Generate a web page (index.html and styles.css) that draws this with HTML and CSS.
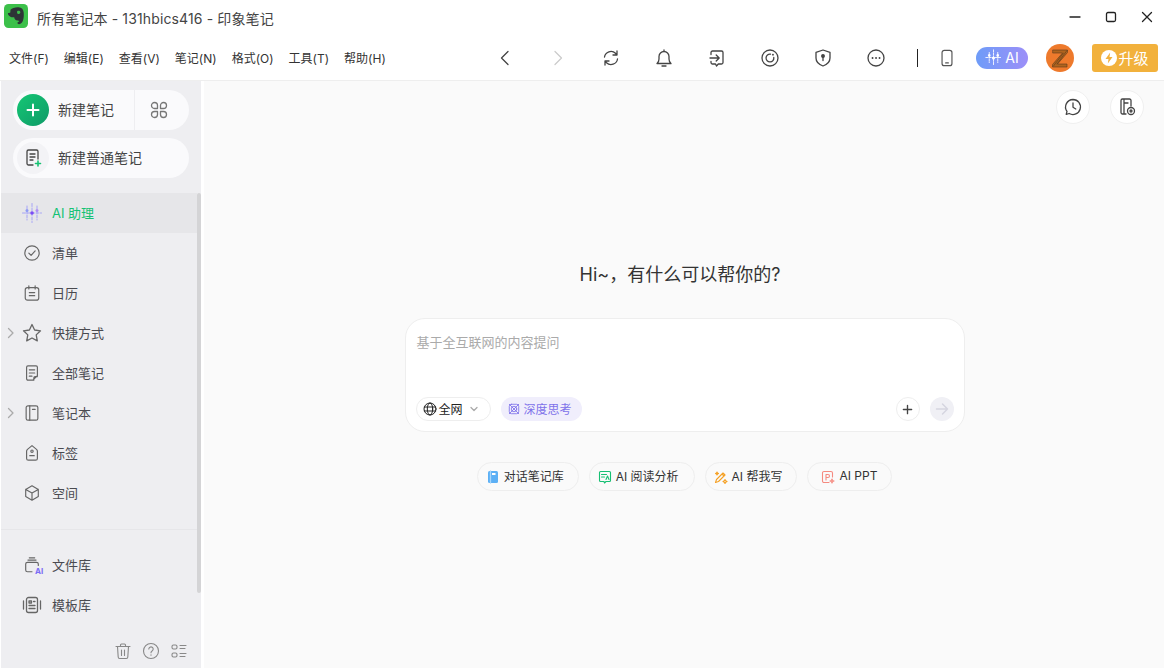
FILE: index.html
```html
<!DOCTYPE html>
<html>
<head>
  <title>印象笔记</title>
  <link rel="stylesheet" href="styles.css">
</head>
<body>
  <div class="titlebar">
    <svg class="logo" viewBox="0 0 24 24"><rect width="24" height="24" rx="4.500" fill="#3cc04a"/><path d="M6.500 5.800C8 3.800 11.500 3 14.500 3.200c3.300.2 5 2.200 5.200 5.300.2 2.600.2 5.700-.8 8.300-.6 1.600-1.900 3.300-3.700 3.400-1.500.1-2.300-1.500-1.300-2.300.5-.4 1.100-.3 1.400-.1-.2-.9-1-1.100-1.900-1.200-1.900-.2-3-1.600-3.200-3.400-2 .5-3.800-.2-5.400-1.800-.8-.8-1-1.500-.8-2.300.6-.2 1.600-.2 2.300-.6z" fill="#2d3436"/><path d="M13.200 7.200c1.300-.8 2.900-.3 3.200 1-.2 1.300-1.200 2-2.200 1.800-1-.2-1.500-1.800-1-2.800z" fill="#3cc04a"/></svg>
    <span class="title">所有笔记本 - 131hbics416 - 印象笔记</span>
    <div class="winctl">
      <svg viewBox="0 0 12 12"><path d="M1 6h10"/></svg>
      <svg viewBox="0 0 12 12"><rect x="1.500" y="1.500" width="9" height="9" rx="1.500"/></svg>
      <svg viewBox="0 0 12 12"><path d="M1.500 1.500l9 9M10.500 1.500l-9 9"/></svg>
    </div>
  </div>

  <div class="toolbar">
    <div class="menu">
      <span>文件(F)</span><span>编辑(E)</span><span>查看(V)</span><span>笔记(N)</span><span>格式(O)</span><span>工具(T)</span><span>帮助(H)</span>
    </div>
    <div class="tools">
      <svg class="tool" viewBox="0 0 20 20"><path d="M13 3.500L6.500 10l6.500 6.500"/></svg>
      <svg class="tool off" viewBox="0 0 20 20"><path d="M7 3.500l6.500 6.500L7 16.500"/></svg>
      <svg class="tool" viewBox="0 0 20 20"><path d="M3.500 9a6.500 6.500 0 0 1 11-3.700L16 7M16.500 11a6.500 6.500 0 0 1-11 3.700L4 13M16 3v4h-4M4 17v-4h4"/></svg>
      <svg class="tool" viewBox="0 0 20 20"><path d="M3 15.500c1.300-1 2-2.200 2-4.500V8.500a5 5 0 0 1 10 0V11c0 2.300.7 3.500 2 4.500zM10 3.500V2M8 18h4"/></svg>
      <svg class="tool" viewBox="0 0 20 20"><path d="M4 6.500V4.500A1.500 1.500 0 0 1 5.500 3h9A1.500 1.500 0 0 1 16 4.500v10a1.500 1.500 0 0 1-1.500 1.500h-3.200l-1.800 2-1-2H5.500A1.500 1.500 0 0 1 4 14.500V13.500M3 10h9M9.200 7l3 3-3 3"/></svg>
      <svg class="tool" viewBox="0 0 20 20"><circle cx="10" cy="10" r="8"/><path d="M13.800 9.500a3.900 3.900 0 1 1-3.300-3.300"/><path class="dots" d="M12.900 6.700h.1"/></svg>
      <svg class="tool" viewBox="0 0 20 20"><path d="M10 2l7 2.300V10c0 3.700-2.800 6.500-7 8-4.200-1.500-7-4.300-7-8V4.300z"/><circle class="solid" cx="10" cy="8" r="1.300"/><path d="M10 8.500v4"/></svg>
      <svg class="tool" viewBox="0 0 20 20"><circle cx="10" cy="10" r="8"/><path class="dots" d="M6.500 10h.1M10 10h.1M13.500 10h.1"/></svg>
      <span class="sep"></span>
      <svg class="phone" viewBox="0 0 20 20"><rect x="4.500" y="1.500" width="11" height="17" rx="2.500"/><path d="M8.500 15.500h3"/></svg>
      <span class="ai-btn">
        <svg viewBox="0 0 20 20"><path stroke-dasharray="2.500 1.200" d="M10 1v18M5 4v12M15 4v12M1 10h18"/><circle class="white" cx="10" cy="10.500" r="1.800"/><circle class="white" cx="5" cy="7.500" r="1.500"/><circle class="white" cx="15" cy="7.500" r="1.500"/></svg>AI
      </span>
      <svg class="avatar" viewBox="0 0 28 28"><circle cx="14" cy="14" r="14" fill="#ee7a2c"/><path d="M7 6h14.500v2.500L11.500 20H21v3H6.500v-2.500L16.500 9H7z" fill="#b0641e"/><path d="M7 6h14.500v2.500L11.500 20H21v3H6.500v-2.500L16.500 9H7zM21 6.500l-10 13.500M17.500 9L7.500 22" fill="none" stroke="#5a3a1c" stroke-width=".6"/></svg>
      <span class="upgrade">
        <svg viewBox="0 0 16 16"><circle cx="8" cy="8" r="8" fill="#fff"/><path d="M9.200 2.500L4.500 9h3L6.800 13.500 11.500 7h-3z" fill="#f2b13c"/></svg>升级
      </span>
    </div>
  </div>

  <div class="app">
    <div class="sidebar">
      <div class="newbtn first">
        <span class="plus"><svg viewBox="0 0 16 16"><path d="M8 2.500v11M2.500 8h11"/></svg></span>
        <span class="newlabel">新建笔记</span>
        <span class="apps"><svg viewBox="0 0 18 18"><path d="M7.500 7.500H4.500a3 3 0 1 1 3-3zM10.500 7.500v-3a3 3 0 1 1 3 3zM7.500 10.500v3a3 3 0 1 1-3-3zM10.500 10.500h3a3 3 0 1 1-3 3z"/></svg></span>
      </div>
      <div class="newbtn">
        <span class="plain">
          <svg viewBox="0 0 20 20"><path class="dark" d="M10 17H5.500A1.500 1.500 0 0 1 4 15.500v-12A1.500 1.500 0 0 1 5.500 2h8A1.500 1.500 0 0 1 15 3.500V11M7 6h5M7 9h5M7 12h3"/><path class="green" d="M15 13v5M12.500 15.500h5"/></svg>
        </span>
        <span class="newlabel">新建普通笔记</span>
      </div>

      <div class="nav">
        <div class="item active">
          <svg class="ico big" viewBox="0 0 20 20"><path class="violet" stroke-dasharray="3 1.500" d="M10 .5v19M5 3v14M15 3v14M.5 10h19"/><circle cx="10" cy="10" r="1.800" fill="#7b4cf5"/><circle cx="5" cy="7.500" r="1.500" fill="#8f9bf5"/><circle cx="15" cy="7.500" r="1.500" fill="#b08ff5"/></svg>
          <span>AI 助理</span>
        </div>
        <div class="item">
          <svg class="ico" viewBox="0 0 20 20"><circle cx="10" cy="10" r="8"/><path d="M6.500 10.200l2.500 2.500 4.500-5"/></svg>
          <span>清单</span>
        </div>
        <div class="item">
          <svg class="ico" viewBox="0 0 20 20"><rect x="2.500" y="4" width="15" height="14" rx="2.500"/><path d="M6.500 2v3.500M13.500 2v3.500M7 9.500h6M7 13h6"/></svg>
          <span>日历</span>
        </div>
        <div class="item">
          <svg class="caret" viewBox="0 0 8 12"><path d="M1.500 1.500L6 6l-4.500 4.500"/></svg>
          <svg class="ico big" viewBox="0 0 20 20"><path d="M10 1.500l2.600 5.500 5.900.8-4.300 4.100 1.100 6-5.300-2.900-5.300 2.900 1.100-6L1.500 7.800 7.400 7z"/></svg>
          <span>快捷方式</span>
        </div>
        <div class="item">
          <svg class="ico" viewBox="0 0 20 20"><path d="M11 18H5.500A1.500 1.500 0 0 1 4 16.500v-13A1.500 1.500 0 0 1 5.500 2h9A1.500 1.500 0 0 1 16 3.500V13zM7 6.500h6M7 10h6M7 13.500h3M16 14h-2.500a1.500 1.500 0 0 0-1.500 1.500V18"/></svg>
          <span>全部笔记</span>
        </div>
        <div class="item">
          <svg class="caret" viewBox="0 0 8 12"><path d="M1.500 1.500L6 6l-4.500 4.500"/></svg>
          <svg class="ico" viewBox="0 0 20 20"><rect x="3.500" y="2" width="13" height="16" rx="2"/><path d="M7.500 2v16M10.500 6h3"/></svg>
          <span>笔记本</span>
        </div>
        <div class="item">
          <svg class="ico" viewBox="0 0 20 20"><path d="M10 1.800l5 4.200c.6.500 1 1.200 1 2v8a2 2 0 0 1-2 2H6a2 2 0 0 1-2-2V8c0-.8.4-1.500 1-2z"/><circle cx="10" cy="8" r="1.300"/><path d="M7.500 13h5"/></svg>
          <span>标签</span>
        </div>
        <div class="item">
          <svg class="ico" viewBox="0 0 20 20"><path d="M10 2l7 4v8l-7 4-7-4V6zM3 6l7 4 7-4M10 10v8"/></svg>
          <span>空间</span>
        </div>
      </div>

      <div class="lib">
        <div class="item">
          <svg class="ico" viewBox="0 0 20 20"><path d="M10 17.500H5a2 2 0 0 1-2-2V9a2 2 0 0 1 2-2h10a2 2 0 0 1 2 2v1.500M5.500 4.500h9M7 2h6"/></svg>
          <span class="ai-mark">AI</span>
          <span>文件库</span>
        </div>
        <div class="item">
          <svg class="ico big" viewBox="0 0 20 20"><rect x="4.500" y="2.500" width="11" height="15" rx="2"/><path d="M1.500 6v8M18.500 6v8M7 10.500h6M7 13.500h6M7 6h2.500v2H7zM11.500 6.500H13"/></svg>
          <span>模板库</span>
        </div>
      </div>

      <div class="sidefoot">
        <svg viewBox="0 0 18 18"><path d="M2 4.500h14M6.500 4.500V3a1 1 0 0 1 1-1h3a1 1 0 0 1 1 1v1.500M3.500 4.500l.7 10.500a1.500 1.500 0 0 0 1.500 1.500h6.600a1.500 1.500 0 0 0 1.500-1.500l.7-10.500M7.500 8v5.500M10.500 8v5.500"/></svg>
        <svg viewBox="0 0 18 18"><circle cx="9" cy="9" r="7.500"/><path d="M6.800 7a2.200 2.200 0 1 1 3.300 2c-.8.500-1.100.900-1.100 1.800M9 12.800v.4"/></svg>
        <svg viewBox="0 0 18 18"><rect x="2" y="3" width="5" height="4" rx="1.500"/><rect x="2" y="11" width="5" height="4" rx="1.500"/><path d="M10 3.500h6M10 6.500h5M10 11.500h6M10 14.500h5"/></svg>
      </div>
      <div class="thumb"></div>
    </div>

    <div class="main">
      <div class="corner">
        <span class="round"><svg viewBox="0 0 20 20"><path d="M10 2.500a7.500 7.500 0 1 1-3.800 14l-3 .9.800-3A7.500 7.500 0 0 1 10 2.500zM10 6v4.300l2.800 1.700"/></svg></span>
        <span class="round"><svg viewBox="0 0 20 20"><path d="M9 17H5.500A1.500 1.500 0 0 1 4 15.500v-12A1.500 1.500 0 0 1 5.500 2h7A1.500 1.500 0 0 1 14 3.500V9M7 6h4M7 2v15"/><circle cx="14" cy="14" r="3.500"/><circle cx="14" cy="14" r="1"/></svg></span>
      </div>

      <div class="center">
        <div class="hello">Hi~，有什么可以帮你的?</div>
        <div class="card">
          <div class="hint">基于全互联网的内容提问</div>
          <div class="cardrow">
            <span class="pill scope">
              <svg class="globe" viewBox="0 0 14 14"><circle cx="7" cy="7" r="6"/><ellipse cx="7" cy="7" rx="2.700" ry="6"/><path d="M1.300 5h11.400M1.300 9h11.400"/></svg><span class="pilltext">全网</span>
              <svg class="chev" viewBox="0 0 10 10"><path d="M2 3.500l3 3 3-3"/></svg>
            </span>
            <span class="pill deep">
              <svg viewBox="0 0 14 14"><rect x="1.500" y="1.500" width="11" height="11" rx="2.500"/><circle cx="7" cy="7" r="3.200"/><path d="M1.500 1.500l11 11M12.500 1.500l-11 11"/></svg><span class="pilltext">深度思考</span>
            </span>
            <span class="grow"></span>
            <span class="mini"><svg viewBox="0 0 12 12"><path d="M6 1.500v9M1.500 6h9"/></svg></span>
            <span class="mini send"><svg viewBox="0 0 14 14"><path d="M1.500 7h11M7.500 2l5 5-5 5"/></svg></span>
          </div>
        </div>
        <div class="chips">
          <span class="chip"><svg viewBox="0 0 14 14"><rect x="2" y="1" width="10" height="12" rx="1.500" fill="#5cb0f5"/><rect x="6" y="3" width="3.500" height="2" fill="#fff"/><path d="M4.500 1v12" stroke="#a8d6fa"/></svg>对话笔记库</span>
          <span class="chip read"><svg class="line green2" viewBox="0 0 14 14"><path d="M6 11.500H2.500a1 1 0 0 1-1-1v-8a1 1 0 0 1 1-1h9a1 1 0 0 1 1 1v8a1 1 0 0 1-1 1H8l-1.500 1.500zM3.500 4.500h5M3.500 7h3M8 9.500l1.500-3.500 1.500 3.500"/></svg>AI 阅读分析</span>
          <span class="chip"><svg class="line orange" viewBox="0 0 14 14"><path d="M1.500 12.500l1-3 6.500-6.500 2 2-6.500 6.500zM8 4l2 2M11 9.500l.7 1.300 1.300.7-1.300.7-.7 1.300-.7-1.300-1.300-.7 1.300-.7zM3 2l.5 1 1 .5-1 .5-.5 1-.5-1-1-.5 1-.5z"/></svg>AI 帮我写</span>
          <span class="chip ppt"><svg class="line coral" viewBox="0 0 14 14"><path d="M8 12.500H3a1.500 1.500 0 0 1-1.500-1.500V3A1.500 1.500 0 0 1 3 1.500h7A1.500 1.500 0 0 1 11.500 3v4M5 10V4.500h2a1.500 1.500 0 0 1 0 3H5M11 9l.6 1.400 1.400.6-1.400.6-.6 1.400-.6-1.400-1.400-.6 1.400-.6z"/></svg>AI PPT</span>
        </div>
      </div>
    </div>
  </div>
</body>
</html>
```

FILE: styles.css
```css
* {
  box-sizing: border-box;
}

html, body {
  height: 100%;
}

body {
  margin: 0;
  display: flex;
  flex-direction: column;
  height: 668px;
  overflow: hidden;
  background-color: #fff;
  color: #33333a;
  font-family: Inter, "Noto Sans CJK SC", sans-serif;
}

svg {
  display: block;
  flex: none;
  fill: none;
  stroke: currentColor;
  stroke-width: 1.3;
  stroke-linecap: round;
  stroke-linejoin: round;
}

/* title bar */
.titlebar {
  display: flex;
  align-items: center;
  height: 40px;
  padding: 0 0 8px 4px;
}

.logo {
  width: 24px;
  height: 24px;
  stroke: none;
}

.title {
  margin-left: 9px;
  margin-top: 4px;
  font-size: 14px;
  letter-spacing: .13px;
  color: #444;
}

.winctl {
  display: flex;
  gap: 24px;
  margin-left: auto;
  padding-right: 11px;
  color: #222;
}

.winctl svg {
  width: 12px;
  height: 12px;
  margin-top: 1px;
}

/* menu + tool row */
.toolbar {
  display: flex;
  align-items: center;
  height: 41px;
  padding-bottom: 5px;
  border-bottom: 1px solid #eeeeee;
}

.menu {
  display: flex;
  gap: 15px;
  width: 495px;
  padding-left: 9px;
  font-size: 12px;
  color: #333;
}

.tools {
  display: flex;
  align-items: center;
}

.tool {
  width: 20px;
  height: 20px;
  margin-right: 33px;
  color: #444;
}

.tool.off {
  color: #ccc;
}

.dots {
  stroke-width: 1.800;
}

.solid {
  fill: currentColor;
}

.sep {
  width: 1px;
  height: 18px;
  margin-left: -2px;
  margin-right: 20px;
  background-color: #222;
}

.phone {
  width: 18px;
  height: 18px;
  margin-right: 20px;
  color: #555;
}

.ai-btn {
  display: flex;
  align-items: center;
  justify-content: center;
  gap: 3px;
  width: 52px;
  height: 22px;
  margin-right: 18px;
  border-radius: 11px;
  background: linear-gradient(90deg, #6e9cf8, #9c8ff8);
  color: #fff;
  font-size: 14px;
}

.ai-btn svg {
  width: 17px;
  height: 17px;
  stroke-width: 1;
}

.white {
  fill: #fff;
  stroke: none;
}

.avatar {
  width: 28px;
  height: 28px;
  margin-right: 18px;
  stroke: none;
}

.upgrade {
  display: flex;
  align-items: center;
  justify-content: center;
  gap: 1px;
  width: 66px;
  height: 28px;
  border-radius: 3px;
  background-color: #f2b13c;
  color: #fff;
  font-size: 15px;
}

.upgrade svg {
  width: 16px;
  height: 16px;
  stroke: none;
}

/* layout */
.app {
  flex: 1;
  display: flex;
  min-height: 0;
}

.sidebar {
  position: relative;
  display: flex;
  flex-direction: column;
  width: 200px;
  margin-left: 1px;
  padding-top: 9px;
  background-color: #eeeef1;
  font-size: 13px;
  color: #4a4a50;
}

.main {
  position: relative;
  flex: 1;
  margin-left: 3px;
  background-color: #fafafa;
}

/* new note buttons */
.newbtn {
  display: flex;
  align-items: center;
  width: 176px;
  height: 40px;
  margin: 0 0 8px 12px;
  padding-left: 4px;
  border-radius: 20px;
  background-color: #fafafc;
}

.plus, .plain {
  display: flex;
  align-items: center;
  justify-content: center;
  width: 32px;
  height: 32px;
  border-radius: 50%;
}

.plus {
  background: linear-gradient(135deg, #15c774, #0f9a68);
  color: #fff;
}

.plus svg {
  width: 16px;
  height: 16px;
  stroke-width: 2;
}

.plain {
  background-color: #f3f3f6;
}

.plain svg {
  width: 20px;
  height: 20px;
}

.dark {
  stroke: #444;
}

.green {
  stroke: #16c172;
  stroke-width: 1.600;
}

.newlabel {
  margin-left: 9px;
  margin-top: -2px;
  font-size: 14px;
  color: #444;
}

.apps {
  display: flex;
  align-items: center;
  justify-content: center;
  width: 55px;
  height: 40px;
  margin-left: auto;
  padding-right: 6px;
  border-left: 1px solid #eeeef1;
  color: #777;
}

.apps svg {
  width: 18px;
  height: 18px;
}

/* navigation */
.nav {
  margin-top: 7px;
  padding-bottom: 16px;
  border-bottom: 1px solid #e6e6e9;
  width: 196px;
}

.item {
  position: relative;
  display: flex;
  align-items: center;
  gap: 11px;
  height: 40px;
  padding-left: 22px;
  color: #4a4a50;
}

.item > span {
  margin-top: -2px;
}

.item.active {
  background-color: #e6e6e9;
  color: #14c274;
}

.ico {
  width: 18px;
  height: 18px;
  color: #666;
}

.ico.big {
  width: 20px;
  height: 20px;
  margin: 0 -1px;
}

.violet {
  stroke: #a6a4f7;
  stroke-width: 1;
}

.item.active circle {
  stroke: none;
}

.caret {
  position: absolute;
  left: 6px;
  width: 8px;
  height: 12px;
  color: #aaa;
}

.item > .ai-mark {
  position: absolute;
  left: 34px;
  top: 21px;
  margin: 0;
  font-size: 8px;
  line-height: 10px;
  font-weight: 700;
  color: #7a6cf5;
}

.lib {
  width: 196px;
  margin-top: 15px;
}

.sidefoot {
  position: absolute;
  left: 113px;
  bottom: 8px;
  display: flex;
  gap: 10px;
  color: #888;
}

.sidefoot svg {
  width: 18px;
  height: 18px;
  stroke-width: 1.100;
}

.thumb {
  position: absolute;
  top: 112px;
  right: 0;
  width: 4px;
  height: 400px;
  border-radius: 2px;
  background-color: #d4d4d6;
}

/* main */
.corner {
  display: flex;
  justify-content: flex-end;
  gap: 20px;
  padding: 9px 20px 0 0;
}

.round {
  display: flex;
  align-items: center;
  justify-content: center;
  width: 34px;
  height: 34px;
  border-radius: 50%;
  border: 1px solid #f0f0f0;
  background-color: #fff;
  color: #444;
}

.round svg {
  width: 20px;
  height: 20px;
}

.center {
  display: flex;
  flex-direction: column;
  align-items: center;
  padding-top: 138px;
  padding-left: 1px;
}

.hello {
  padding-right: 9px;
  font-size: 18px;
  line-height: 26px;
  color: #333;
}

.card {
  display: flex;
  flex-direction: column;
  justify-content: space-between;
  width: 560px;
  height: 114px;
  margin-top: 30px;
  padding: 12px 10px 10px 10px;
  border: 1px solid #eeeeee;
  border-radius: 20px;
  background-color: #fff;
}

.hint {
  padding-left: 1px;
  font-size: 13px;
  line-height: 22px;
  color: #aaaaaa;
}

.cardrow {
  display: flex;
  align-items: center;
  gap: 10px;
  font-size: 12px;
}

.grow {
  flex: 1;
}

.pill {
  display: flex;
  align-items: center;
  height: 24px;
  border-radius: 12px;
}

.pilltext {
  margin-top: -2px;
}

.scope {
  width: 75px;
  padding-left: 6px;
  border: 1px solid #eeeeee;
  color: #222;
}

.globe {
  width: 14px;
  height: 14px;
  margin-right: 2px;
  stroke-width: 1;
}

.chev {
  width: 10px;
  height: 10px;
  margin-left: 6px;
  color: #aaa;
}

.deep {
  width: 81px;
  padding-left: 7px;
  background-color: #f0eefc;
  color: #7e72ea;
}

.deep svg {
  width: 12px;
  height: 12px;
  margin-right: 4px;
  stroke-width: 1;
}

.mini {
  display: flex;
  align-items: center;
  justify-content: center;
  width: 24px;
  height: 24px;
  border-radius: 50%;
  border: 1px solid #eeeeee;
  color: #444;
}

.mini svg {
  width: 11px;
  height: 11px;
  stroke-width: 1.500;
}

.mini.send {
  border: none;
  background-color: #f0f0f5;
  color: #d5d5e0;
}

.mini.send svg {
  width: 14px;
  height: 14px;
}

.chips {
  display: flex;
  gap: 10px;
  margin-top: 30px;
}

.chip {
  display: flex;
  align-items: center;
  gap: 4px;
  height: 29px;
  padding: 0 14px 2px 8px;
  border: 1px solid #eeeeee;
  border-radius: 15px;
  font-size: 12px;
  color: #333;
}

.chip.read {
  padding-right: 15px;
}

.chip.ppt {
  padding-left: 13px;
}

.chip svg {
  width: 14px;
  height: 14px;
  margin-top: 2px;
  stroke: none;
}

.chip svg.line {
  stroke-width: 1.100;
}

.green2 {
  color: #17c073;
  stroke: currentColor !important;
}

.orange {
  color: #f5a023;
  stroke: currentColor !important;
}

.coral {
  color: #f58a80;
  stroke: currentColor !important;
}
```
